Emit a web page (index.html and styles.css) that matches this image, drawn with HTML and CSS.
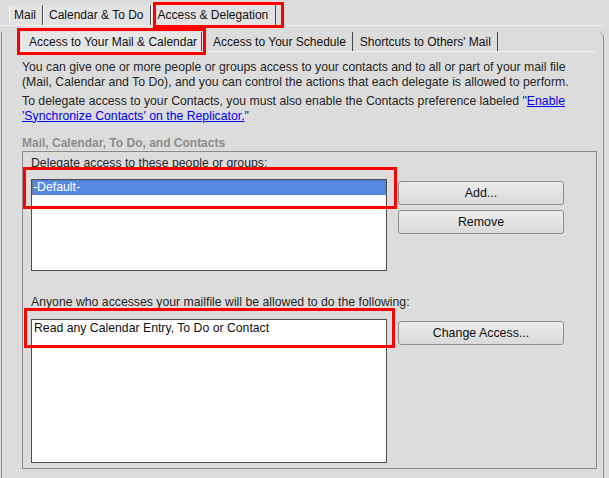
FILE: index.html
```html
<!DOCTYPE html>
<html>
<head>
<meta charset="utf-8">
<link rel="stylesheet" href="styles.css">
</head>
<body>
<div class="tabs">
  <div class="tab">Mail</div>
  <div class="tab">Calendar &amp; To Do</div>
  <div class="tab active">Access &amp; Delegation</div>
</div>
<div class="frame">
  <div class="subtabs">
    <div class="subtab active">Access to Your Mail &amp; Calendar</div>
    <div class="subtab">Access to Your Schedule</div>
    <div class="subtab">Shortcuts to Others' Mail</div>
  </div>
  <div class="content">
    <p class="para">You can give one or more people or groups access to your contacts and to all or part of your mail file (Mail, Calendar and To Do), and you can control the actions that each delegate is allowed to perform.</p>
    <p class="para para-second">To delegate access to your Contacts, you must also enable the Contacts preference labeled "<a class="link" href="#">Enable 'Synchronize Contacts' on the Replicator.</a>"</p>
    <div class="group-label">Mail, Calendar, To Do, and Contacts</div>
    <div class="group">
      <div class="field-label">Delegate access to these people or groups:</div>
      <div class="row">
        <div class="list list-small">
          <div class="item selected">-Default-</div>
        </div>
        <div class="buttons">
          <button class="btn">Add...</button>
          <button class="btn">Remove</button>
        </div>
      </div>
      <div class="field-label field-label-second">Anyone who accesses your mailfile will be allowed to do the following:</div>
      <div class="row row-second">
        <div class="list list-large">
          <div class="item">Read any Calendar Entry, To Do or Contact</div>
        </div>
        <div class="buttons">
          <button class="btn">Change Access...</button>
        </div>
      </div>
    </div>
  </div>
</div>
<div class="mark mark-tab"></div>
<div class="mark mark-subtab"></div>
<div class="mark mark-list1"></div>
<div class="mark mark-list2"></div>
</body>
</html>
```
FILE: styles.css
```css
* { box-sizing: border-box; }
html, body { margin: 0; padding: 0; }
body {
  background: #dcdcdc;
  font-family: "Liberation Sans", Arial, sans-serif;
  font-size: 12px;
  color: #1e1e1e;
  width: 609px;
  height: 478px;
  overflow: hidden;
  position: relative;
}
.tabs {
  display: flex;
  padding: 5px 0 0 9px;
  margin-right: 6px;
  height: 26px;
  border-bottom: 1px solid #f2f2f2;
}
.tab {
  height: 20px;
  line-height: 20px;
  padding: 0 6px 0 4px;
  background: #e2e2e2;
  border-left: 1px solid #f6f6f6;
  border-right: 1px solid #4a4a4a;
  color: #111;
}
.tab + .tab { padding-left: 5px; }
.tab.active { padding: 0 7px 0 6px; }
.frame {
  margin: 2px 5px 0 1px;
  height: 450px;
  border: 1px solid #8c8c8c;
  border-top: 0;
  border-bottom: 0;
  border-top-right-radius: 6px;
}
.subtabs {
  display: flex;
  margin: 6px 8px 0 19px;
  height: 20px;
  border-bottom: 1px solid #f2f2f2;
}
.subtab {
  height: 19px;
  line-height: 20px;
  padding: 0 6px 0 7px;
  background: #dcdcdc;
  border-right: 1px solid #4a4a4a;
  color: #111;
}
.subtab.active {
  background: #e6e6e6;
  border-left: 1px solid #f6f6f6;
  padding-right: 4px;
  margin-right: 4px;
}
.content {
  padding: 8px 7px 0 20px;
}
.para {
  margin: 0;
  width: 566px;
  font-size: 12.25px;
  line-height: 14.5px;
  color: #262626;
}
.para-second { margin-top: 5px; }
.link { color: #0000ee; text-decoration: underline; }
.group-label {
  margin-top: 13px;
  font-size: 12px;
  line-height: 15px;
  font-weight: bold;
  color: #8d8d8d;
}
.group {
  width: 575px;
  height: 318px;
  border: 1px solid #8a8a8a;
  padding: 4px 0 0 8px;
}
.field-label {
  font-size: 12.25px;
  line-height: 14px;
  color: #262626;
}
.field-label-second { margin-top: 24px; }
.row {
  display: flex;
  align-items: flex-start;
  gap: 11px;
  margin-top: 9px;
}
.row-second { margin-top: 10px; }
.list {
  width: 356px;
  background: #fff;
  border: 1px solid #4e4e4e;
}
.list-small { height: 92px; }
.list-large { height: 144px; }
.item {
  height: 15px;
  line-height: 14px;
  padding-left: 1px;
  font-size: 12.25px;
  color: #111;
}
.list-large .item { padding-left: 2px; line-height: 16px; }
.item.selected {
  background: #5689e2;
  color: #fff;
  outline: 1px dotted #8a6a3a;
  outline-offset: -1px;
}
.buttons {
  display: flex;
  flex-direction: column;
  gap: 5px;
  padding-top: 2px;
}
.btn {
  width: 166px;
  height: 24px;
  margin: 0;
  padding: 0;
  font-family: "Liberation Sans", Arial, sans-serif;
  font-size: 12.4px;
  color: #111;
  background: linear-gradient(#ececec, #dadada);
  border: 1px solid #8e8e8e;
  border-radius: 3px;
}
.mark {
  position: absolute;
  border: 3px solid #ff0000;
}
.mark-tab { left: 153px; top: 2px; width: 131px; height: 26px; }
.mark-subtab { left: 17px; top: 28px; width: 189px; height: 27px; }
.mark-list1 { left: 23px; top: 167px; width: 374px; height: 42px; }
.mark-list2 { left: 24px; top: 308px; width: 371px; height: 40px; }
```
